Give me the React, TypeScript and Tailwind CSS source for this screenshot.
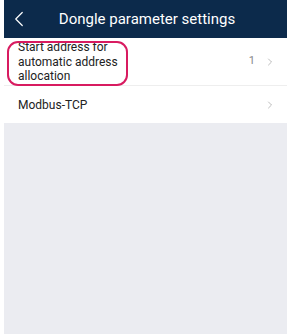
import { ChevronLeft, ChevronRight } from 'lucide-react';

const font = { fontFamily: 'Roboto, "Liberation Sans", sans-serif' };

export default function App() {
  return (
    <div className="w-[293px] h-[334px] bg-white pl-[4px] pr-[6px]" style={font}>
      <div className="flex flex-col h-full">
        <header className="relative h-[38px] bg-[#0c2a4b] flex items-center justify-center shrink-0">
          <ChevronLeft className="absolute left-[2px] top-[6px] w-[26px] h-[26px] text-white" strokeWidth={1.1} />
          <h1 className="text-white text-[15px] ml-[3px]">Dongle parameter settings</h1>
        </header>

        <div className="relative flex items-center h-[48px] border-b border-[#eeeeee] pl-[14px] pr-[11px]">
          <div className="text-[12px] leading-[14.5px] text-[#222] flex-1 pt-[1px]">
            Start address for
            <br />
            automatic address
            <br />
            allocation
          </div>
          <span className="text-[11px] text-[#888] mr-[9px]">1</span>
          <ChevronRight className="w-[12px] h-[12px] text-[#999]" strokeWidth={1.3} />
          <div className="absolute left-[3px] top-[3px] w-[121px] h-[45px] rounded-[11px] border-2 border-[#d81b60]" />
        </div>

        <div className="flex items-center h-[37px] pl-[14px] pr-[11px]">
          <span className="flex-1 text-[12px] text-[#222]">Modbus-TCP</span>
          <ChevronRight className="w-[12px] h-[12px] text-[#999]" strokeWidth={1.3} />
        </div>

        <div className="flex-1 bg-[#ebecf1]" />
      </div>
    </div>
  );
}
